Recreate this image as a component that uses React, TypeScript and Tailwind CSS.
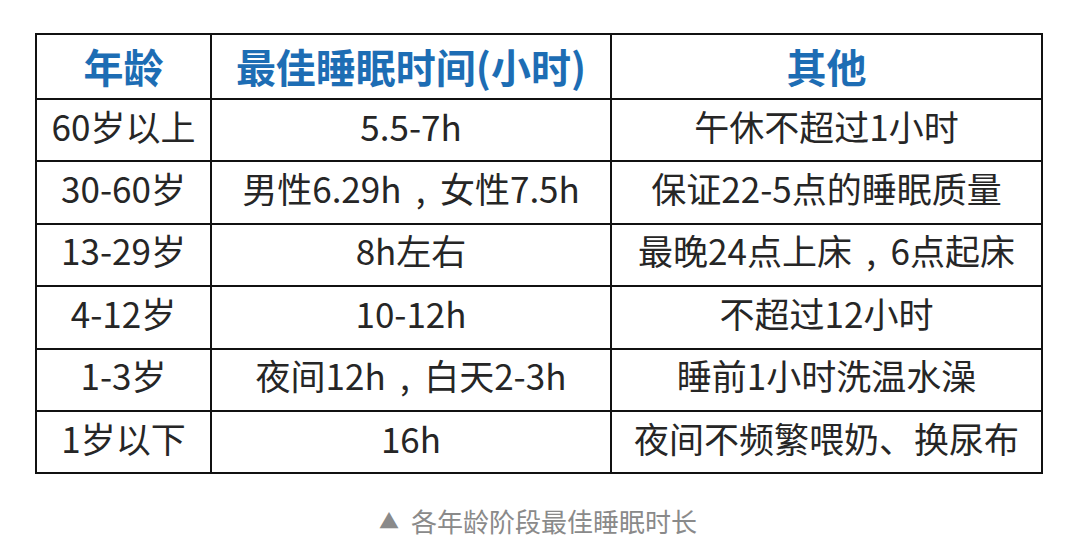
import React from 'react';

const rows: [string, string, string][] = [
  ['60岁以上', '5.5-7h', '午休不超过1小时'],
  ['30-60岁', '男性6.29h，女性7.5h', '保证22-5点的睡眠质量'],
  ['13-29岁', '8h左右', '最晚24点上床，6点起床'],
  ['4-12岁', '10-12h', '不超过12小时'],
  ['1-3岁', '夜间12h，白天2-3h', '睡前1小时洗温水澡'],
  ['1岁以下', '16h', '夜间不频繁喂奶、换尿布'],
];

// centre the full-width comma the way the source table shows it
function Cell({ text }: { text: string }) {
  const parts = text.split('，');
  return (
    <>
      {parts.map((p, i) => (
        <React.Fragment key={i}>
          {i > 0 && <span className="inline-block w-[1.1em] text-center">,</span>}
          {p}
        </React.Fragment>
      ))}
    </>
  );
}

export default function App() {
  return (
    <div
      className="w-[1080px] h-[559px] bg-white pt-[33px] pl-[35px] overflow-hidden"
      style={{ fontFamily: '"Noto Sans CJK SC", "Noto Sans", sans-serif' }}
    >
      <table className="w-[1006px] border-collapse border-2 border-[#111] table-fixed">
        <colgroup>
          <col className="w-[175px]" />
          <col className="w-[400px]" />
          <col className="w-[431px]" />
        </colgroup>
        <thead>
          <tr className="h-[65px]">
            {['年龄', '最佳睡眠时间(小时)', '其他'].map((h) => (
              <th
                key={h}
                className="border-2 border-[#111] text-center align-middle text-[40px] font-bold text-[#1d6db4] leading-none pb-[2px]"
              >
                {h}
              </th>
            ))}
          </tr>
        </thead>
        <tbody>
          {rows.map((r) => (
            <tr key={r[0]} className="h-[62.4px]">
              {r.map((c, i) => (
                <td
                  key={i}
                  className="border-2 border-[#111] text-center align-middle text-[35px] text-[#262626] leading-none pb-[10px] whitespace-nowrap"
                >
                  <Cell text={c} />
                </td>
              ))}
            </tr>
          ))}
        </tbody>
      </table>
      <div className="mt-[34px] w-[1006px] flex items-center justify-center gap-[12px] text-[26px] text-[#8a8a8a] leading-none">
        <span className="text-[20px]">▲</span>
        <span>各年龄阶段最佳睡眠时长</span>
      </div>
    </div>
  );
}
